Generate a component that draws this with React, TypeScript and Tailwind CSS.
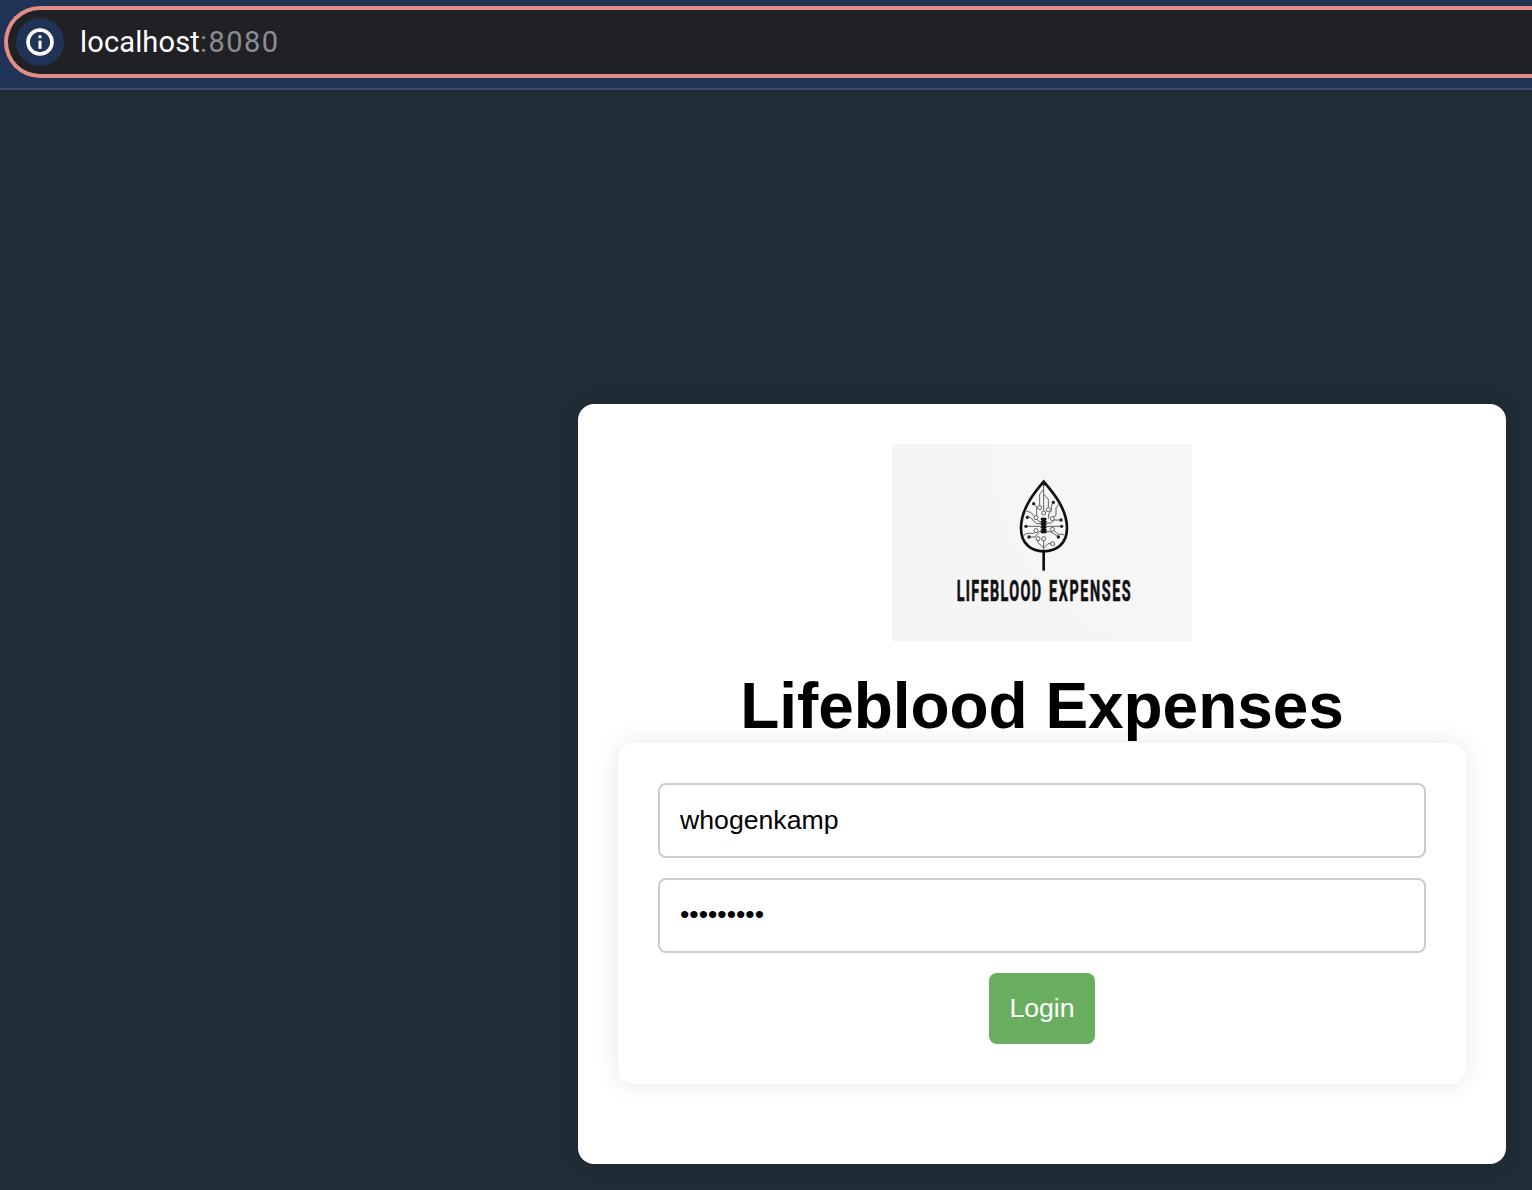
function InfoIcon() {
  return (
    <svg viewBox="0 0 28 28" className="size-7" fill="none" stroke="#fff">
      <circle cx="14" cy="14" r="12" strokeWidth="3.6" />
      <path d="M14 12.6v8.2" strokeWidth="3" />
      <path d="M14 7.4v2.8" strokeWidth="3" />
    </svg>
  );
}

function Logo() {
  const dots = [
    [431, 191], [490, 187], [412, 232], [513, 240], [408, 259], [515, 259], [417, 291], [505, 291],
  ];
  const rings = [
    [449, 203], [475, 209], [461, 219], [438, 233], [487, 236], [438, 272], [487, 268], [444, 296], [461, 296], [488, 311],
  ];
  return (
    <svg viewBox="6 12 900 591" className="h-[197px] w-[300px] bg-[#f6f6f6]" fill="none">
      <path d="M780 12C800 80 835 125 906 135V12Z" fill="#f7f7f7" />
      <path d="M6 12H295C303 210 365 380 590 560L700 603H6Z" fill="#f5f5f5" />
      <g stroke="#555" strokeWidth="2.8">
        <path d="M461 132V212M461 148L449 163V196M461 162L475 178V202" />
        <path d="M431 191L440 201V226M440 238L450 246H461M490 187L484 198V212L476 222V236" />
        <path d="M505 194L498 203V226L487 233M410 214L422 217L435 230" />
        <path d="M412 232H421L439 251H461M513 240H492L484 249H461" />
        <path d="M408 259H515M401 286L411 280H431L438 275M417 291H435L449 274H461" />
        <path d="M522 283H504L491 270M505 291L490 280L480 275H461M444 300V308L461 324M461 300V334M461 324L474 311H483" />
      </g>
      <g fill="#f9f9f9" stroke="#555" strokeWidth="2.8">
        {rings.map(([x, y]) => <circle key={`${x}-${y}`} cx={x} cy={y} r="6" />)}
      </g>
      <g fill="#222">
        {dots.map(([x, y]) => <circle key={`${x}-${y}`} cx={x} cy={y} r="5" />)}
      </g>
      <path d="M461 233V280" stroke="#111" strokeWidth="13" />
      <path d="M452 237H470M452 245H470M452 253H470M452 262H470M452 270H470M452 277H470" stroke="#111" strokeWidth="4" />
      <path d="M461 125C436 154 393 205 393 264C393 311 423 334 461 334C500 334 531 311 531 264C531 205 486 154 461 125Z" stroke="#111" strokeWidth="8" />
      <path d="M461 120L452 136H470Z" fill="#111" />
      <path d="M461 334V392" stroke="#111" strokeWidth="8" />
      <g fill="#111" stroke="#111" strokeWidth="2" fontFamily="Roboto, sans-serif" fontSize="86" fontWeight="700">
        <text transform="translate(200 484) scale(.5 1)" textLength="506" lengthAdjust="spacing">LIFEBLOOD</text>
        <text transform="translate(477 484) scale(.5 1)" textLength="490" lengthAdjust="spacing">EXPENSES</text>
      </g>
    </svg>
  );
}

export default function App() {
  const field =
    "block h-[75px] w-full rounded-lg border-2 border-[#ccc] bg-white px-5 text-[26.67px] text-black outline-none";
  return (
    <div className="flex h-[1190px] w-[1532px] flex-col overflow-hidden bg-[#212d36] font-['Liberation_Sans',Arial,sans-serif]">
      <header className="h-[90px] shrink-0 border-b-2 border-[#3c4c71] bg-[#213257] pt-1.5 pl-1">
        <div className="flex h-[72px] items-center rounded-l-full border-4 border-r-0 border-[#e18e88] bg-[#202124] pl-2">
          <div className="flex size-12 items-center justify-center rounded-full bg-[#213257]">
            <InfoIcon />
          </div>
          <div className="ml-4 font-[Roboto,sans-serif] text-[29px] leading-none tracking-[0.15px] text-white">
            localhost<span className="tracking-[1.5px] text-[#8c8d90]">:8080</span>
          </div>
        </div>
      </header>
      <main className="mt-[314px] ml-[578px] flex h-[760px] w-[928px] flex-col items-center rounded-2xl bg-white px-10 pt-10 shadow-[0_0_20px_rgba(0,0,0,0.1)]">
        <Logo />
        <h1 className="mt-[29px] h-[73px] text-[64px] leading-[73px] font-bold tracking-[-0.05px] whitespace-nowrap text-black">
          Lifeblood Expenses
        </h1>
        <form
          className="flex h-[341px] w-full flex-col items-center gap-5 rounded-2xl bg-white p-10 shadow-[0_0_24px_rgba(0,0,0,0.1)]"
          onSubmit={(e) => e.preventDefault()}
        >
          <input className={field} type="text" aria-label="Username" defaultValue="whogenkamp" />
          <input className={`${field} pb-0.5`} type="password" aria-label="Password" defaultValue="lifeblood" />
          <button className="h-[71px] w-[106px] rounded-lg bg-[#69ad5e] pb-0.5 text-[26.67px] text-white">Login</button>
        </form>
      </main>
    </div>
  );
}
